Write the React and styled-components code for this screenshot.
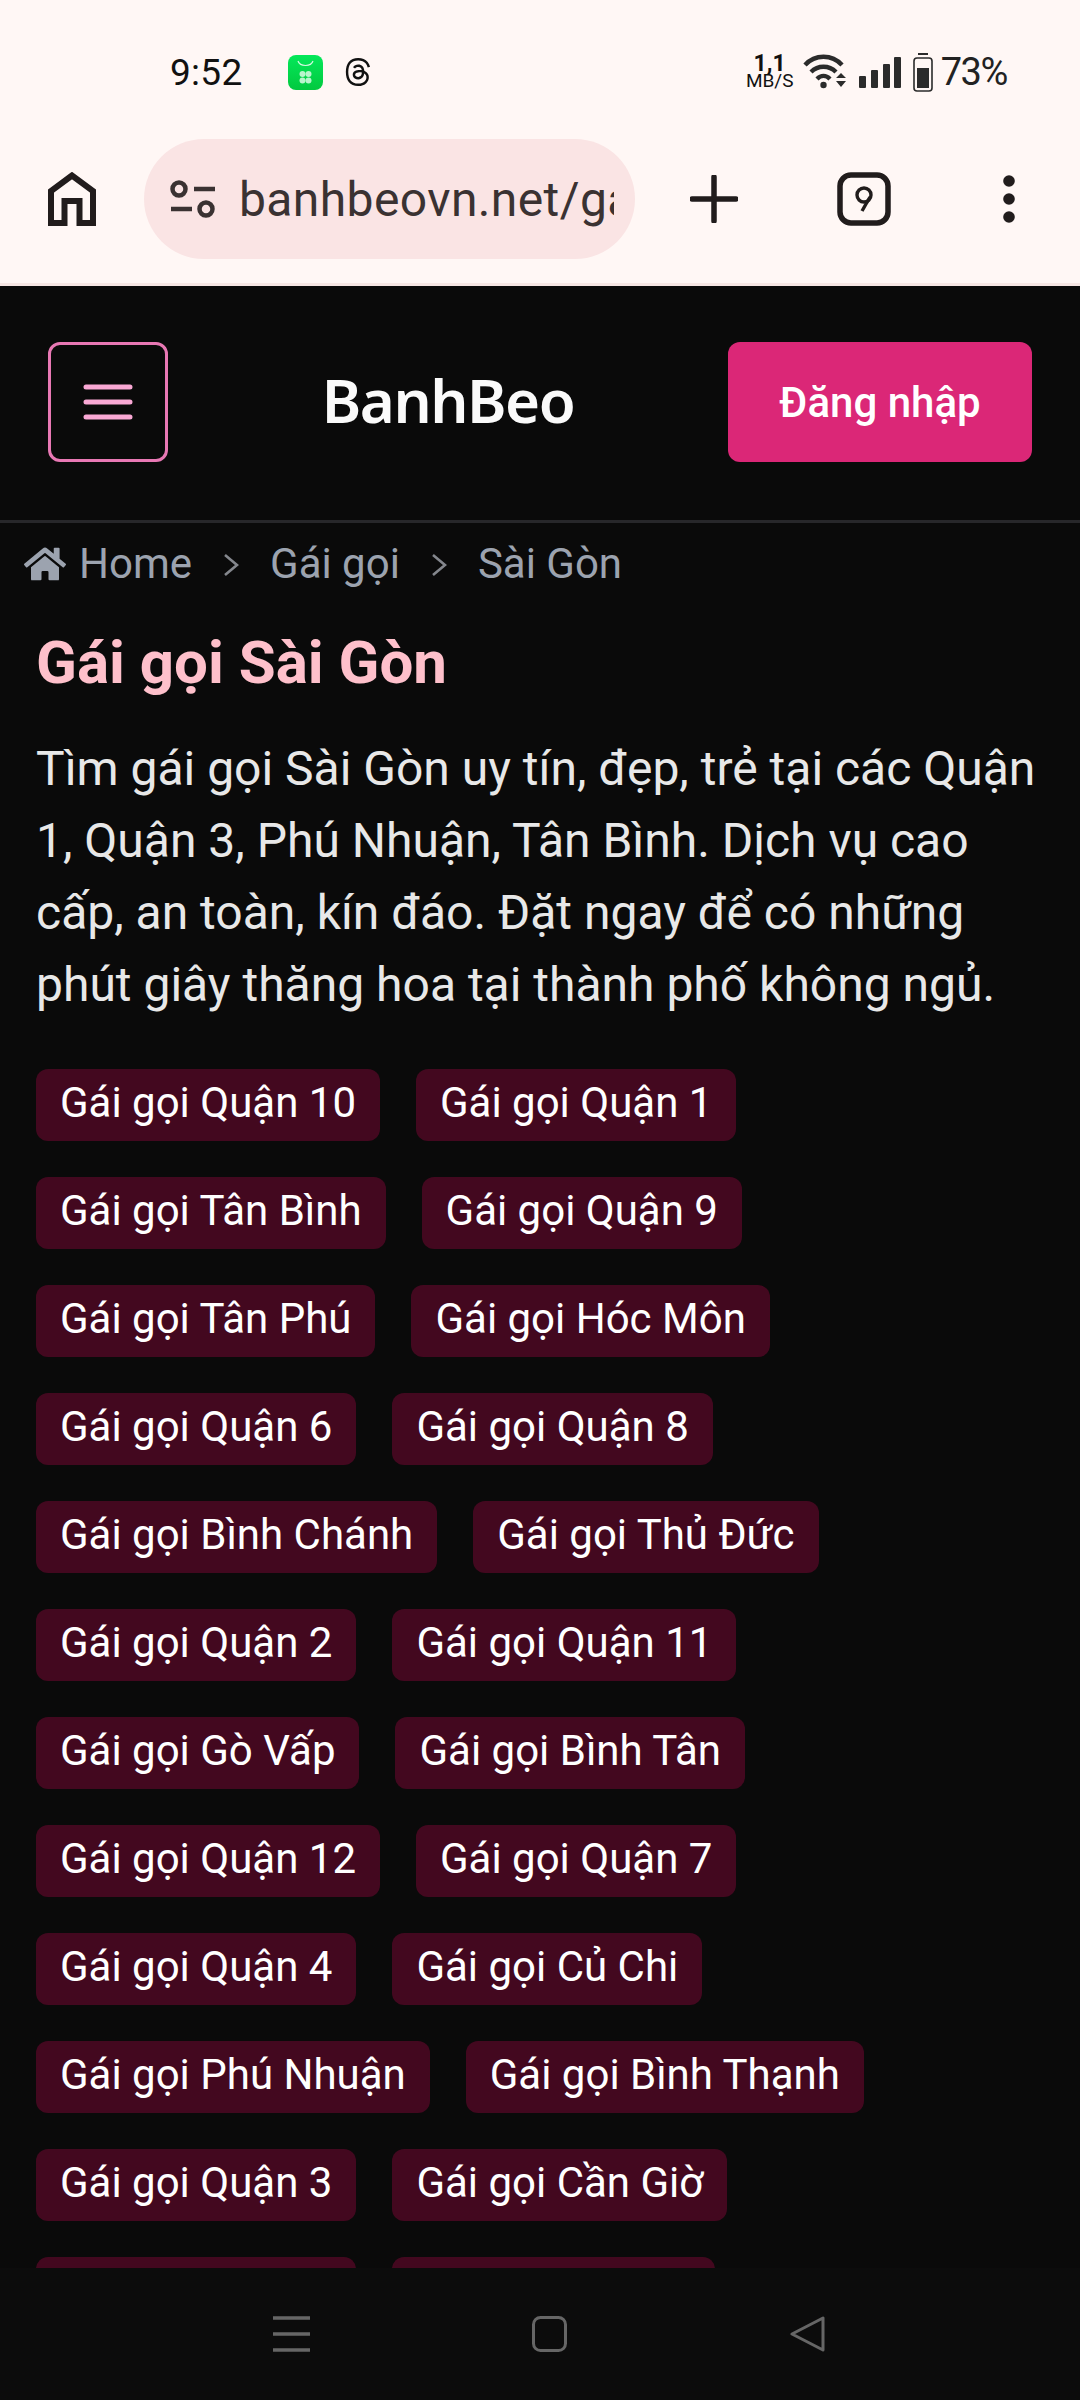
import React from 'react';
import styled, { createGlobalStyle } from 'styled-components';
import { FaHome } from 'react-icons/fa';
import { FaThreads } from 'react-icons/fa6';

const GlobalStyle = createGlobalStyle`
  html, body {
    margin: 0;
    padding: 0;
    background: #0a0a0a;
    font-family: Roboto, "Noto Sans", sans-serif;
  }
  * { box-sizing: border-box; }
`;

const Phone = styled.div`
  width: 1080px;
  height: 2400px;
  display: flex;
  flex-direction: column;
  overflow: hidden;
`;

const StatusBar = styled.div`
  height: 139px;
  background: #fff7f5;
  color: #111;
  display: flex;
  align-items: center;
  padding: 5px 73px 0 170px;
  flex-shrink: 0;
`;

const Time = styled.span`
  font-size: 37px;
  width: 118px;
  letter-spacing: 0.3px;
`;

const AppIcon = styled.svg`
  width: 35px;
  height: 35px;
  margin-right: 20px;
`;

const StatusRight = styled.div`
  margin-left: auto;
  display: flex;
  align-items: center;
`;

const Speed = styled.div`
  width: 46px;
  margin-right: 10px;
  display: flex;
  flex-direction: column;
  align-items: center;
  font-size: 19px;
  line-height: 17px;
  font-weight: 400;
  color: #111;
  b {
    font-size: 23px;
    line-height: 17px;
    font-weight: 700;
  }
`;

const StatusSvg = styled.svg`
  display: block;
  margin-right: ${(p) => p.$gap}px;
`;

const Percent = styled.span`
  font-size: 38px;
  color: #222;
  letter-spacing: -1.4px;
`;

const Toolbar = styled.div`
  height: 147px;
  background: #fff7f5;
  border-bottom: 3px solid #f6e6e4;
  display: flex;
  align-items: flex-start;
  padding-left: 48px;
  flex-shrink: 0;
`;

const ToolIcon = styled.svg`
  display: block;
  margin-top: ${(p) => p.$top}px;
  margin-left: ${(p) => p.$left}px;
  color: #211c1c;
`;

const UrlPill = styled.div`
  width: 491px;
  height: 120px;
  margin-left: 48px;
  border-radius: 60px;
  background: #fae4e4;
  display: flex;
  align-items: center;
  padding-left: 26px;
  color: #3a3232;
`;

const UrlText = styled.div`
  margin-left: 24px;
  width: 375px;
  font-size: 48px;
  white-space: nowrap;
  overflow: hidden;
  font-family: Roboto, sans-serif;
  letter-spacing: 0.4px;
`;

const Web = styled.div`
  flex: 1;
  min-height: 0;
  overflow: hidden;
  background: #0a0a0a;
`;

const Header = styled.header`
  height: 237px;
  display: flex;
  align-items: center;
  justify-content: space-between;
  padding: 0 48px 2px;
  border-bottom: 3px solid #27272a;
`;

const MenuButton = styled.button`
  width: 120px;
  height: 120px;
  background: transparent;
  border: 3px solid #e878b4;
  border-radius: 12px;
  display: flex;
  align-items: center;
  justify-content: center;
  padding: 0;
  color: #f9a8d4;
`;

const Logo = styled.div`
  font-family: "Noto Sans", sans-serif;
  font-size: 60px;
  line-height: 72px;
  font-weight: 600;
  letter-spacing: -1.5px;
  color: #fafafa;
  padding-bottom: 4px;
`;

const LoginButton = styled.button`
  width: 304px;
  height: 120px;
  background: #db2777;
  color: #fff;
  border: none;
  border-radius: 12px;
  font-family: Roboto, sans-serif;
  font-size: 42px;
  font-weight: 500;
`;

const Crumbs = styled.nav`
  height: 81px;
  padding: 0 24px;
  display: flex;
  align-items: center;
  color: #9ca3af;
  font-size: 42px;
  svg.home {
    width: 42px;
    height: 38px;
    margin-right: 13px;
  }
`;

const CrumbSep = styled.svg`
  display: block;
  width: 16px;
  height: 24px;
  margin: 3px 31px 0;
  color: #84878d;
`;

const Main = styled.main`
  padding: 0 36px;
`;

const Title = styled.h1`
  margin: 23px 0 0;
  font-size: 60px;
  line-height: 72px;
  font-weight: 700;
  color: #fec0cb;
`;

const Intro = styled.p`
  margin: 34px 0 0;
  font-size: 48px;
  line-height: 72px;
  color: #e8e8e8;
`;

const Tags = styled.div`
  margin-top: 48px;
  display: flex;
  flex-wrap: wrap;
  gap: 36px;
`;

const Tag = styled.a`
  height: 72px;
  padding: 0 24px;
  border-radius: 12px;
  background: #43081f;
  color: #fff;
  font-size: 42px;
  line-height: 68px;
  white-space: nowrap;
`;

const NavBar = styled.div`
  height: 132px;
  background: #0c0c0c;
  flex-shrink: 0;
  display: flex;
  align-items: flex-start;
  padding: 48px 0 0 273px;
  color: #666;
`;

const NavIcon = styled.svg`
  display: block;
  margin-right: ${(p) => p.$gap}px;
`;

const tagNames = [
  'Quận 10', 'Quận 1', 'Tân Bình', 'Quận 9', 'Tân Phú', 'Hóc Môn',
  'Quận 6', 'Quận 8', 'Bình Chánh', 'Thủ Đức', 'Quận 2', 'Quận 11',
  'Gò Vấp', 'Bình Tân', 'Quận 12', 'Quận 7', 'Quận 4', 'Củ Chi',
  'Phú Nhuận', 'Bình Thạnh', 'Quận 3', 'Cần Giờ', 'Quận 5', 'Nhà Bè',
];

const Chevron = () => (
  <CrumbSep viewBox="0 0 16 24">
    <path d="M2 2l12 10L2 22" fill="none" stroke="currentColor" strokeWidth="2.6" />
  </CrumbSep>
);

const App = () => (
  <Phone>
    <GlobalStyle />
    <StatusBar>
      <Time>9:52</Time>
      <AppIcon viewBox="0 0 35 35">
        <defs>
          <linearGradient id="storeGreen" x1="0" y1="0" x2="0" y2="1">
            <stop offset="0" stopColor="#05e85a" />
            <stop offset="1" stopColor="#02c93f" />
          </linearGradient>
        </defs>
        <rect width="35" height="35" rx="8" fill="url(#storeGreen)" />
        <path d="M10 6c2 6 13 6 15 0" fill="none" stroke="#d4f8e0" strokeWidth="1.2" />
        <g fill="#b9f5cd">
          <circle cx="14.5" cy="19" r="3" />
          <circle cx="20.5" cy="19" r="3" />
          <circle cx="14.5" cy="25.5" r="3" />
          <circle cx="20.5" cy="25.5" r="3" />
        </g>
      </AppIcon>
      <FaThreads size={30} color="#111" />
      <StatusRight>
        <Speed>
          <b>1,1</b>
          MB/S
        </Speed>
        <StatusSvg $gap={12} width="44" height="36" viewBox="0 0 44 36">
          <g fill="none" stroke="#2b2b2b" strokeWidth="4.4">
            <path d="M2 11C12 0 29 0 39 11" />
            <path d="M8 18c7-7 18-7 25 0" />
            <path d="M14 25c4-4 9-4 13 0" />
          </g>
          <circle cx="20.5" cy="31" r="3.2" fill="#2b2b2b" />
          <path d="M33 24h10l-5-5zM33 27h10l-5 6z" fill="#2b2b2b" />
        </StatusSvg>
        <StatusSvg $gap={12} width="42" height="31" viewBox="0 0 42 31">
          <g fill="#2b2b2b">
            <rect x="0" y="19" width="7" height="12" rx="1" />
            <rect x="12" y="13" width="7" height="18" rx="1" />
            <rect x="24" y="7" width="7" height="24" rx="1" />
            <rect x="35" y="0" width="7" height="31" rx="1" />
          </g>
        </StatusSvg>
        <StatusSvg $gap={8} width="20" height="39" viewBox="0 0 20 39">
          <rect x="5" y="0" width="10" height="2" fill="#2b2b2b" />
          <rect x="1" y="5" width="18" height="33" rx="3" fill="none" stroke="#2b2b2b" strokeWidth="1.6" />
          <rect x="4" y="15" width="12" height="20" fill="#2b2b2b" />
        </StatusSvg>
        <Percent>73%</Percent>
      </StatusRight>
    </StatusBar>

    <Toolbar>
      <ToolIcon $top={33} $left={0} width="48" height="54" viewBox="0 0 48 54">
        <path
          d="M24 3.5 3 19v32h13.5V29h15v22H45V19z"
          fill="none"
          stroke="currentColor"
          strokeWidth="6"
        />
      </ToolIcon>
      <UrlPill>
        <svg width="45" height="38" viewBox="0 0 45 38" fill="none" stroke="currentColor" strokeWidth="4.5">
          <circle cx="9" cy="9" r="6.5" />
          <circle cx="36" cy="29" r="6.5" />
          <path d="M24 9h21M1 29h21" />
        </svg>
        <UrlText>banhbeovn.net/gái-gọi</UrlText>
      </UrlPill>
      <ToolIcon $top={36} $left={55} width="48" height="48" viewBox="0 0 48 48">
        <path d="M24 2v44M2 24h44" stroke="currentColor" strokeWidth="5.5" strokeLinecap="round" />
      </ToolIcon>
      <ToolIcon $top={33} $left={99} width="54" height="54" viewBox="0 0 54 54">
        <rect x="3" y="3" width="48" height="48" rx="11" fill="none" stroke="currentColor" strokeWidth="5.5" />
        <circle cx="27" cy="23" r="7" fill="none" stroke="currentColor" strokeWidth="3.4" />
        <path d="M33 25 25 39" stroke="currentColor" strokeWidth="3.4" />
      </ToolIcon>
      <ToolIcon $top={36} $left={112} width="12" height="48" viewBox="0 0 12 48">
        <circle cx="6" cy="6" r="5.8" fill="currentColor" />
        <circle cx="6" cy="24" r="5.8" fill="currentColor" />
        <circle cx="6" cy="42" r="5.8" fill="currentColor" />
      </ToolIcon>
    </Toolbar>

    <Web>
      <Header>
        <MenuButton aria-label="menu">
          <svg width="50" height="36" viewBox="0 0 50 36">
            <path d="M3 3h44M3 18h44M3 33h44" stroke="currentColor" strokeWidth="5" strokeLinecap="round" />
          </svg>
        </MenuButton>
        <Logo>BanhBeo</Logo>
        <LoginButton>Đăng nhập</LoginButton>
      </Header>

      <Crumbs>
        <FaHome className="home" />
        <span>Home</span>
        <Chevron />
        <span>Gái gọi</span>
        <Chevron />
        <span>Sài Gòn</span>
      </Crumbs>

      <Main>
        <Title>Gái gọi Sài Gòn</Title>
        <Intro>
          Tìm gái gọi Sài Gòn uy tín, đẹp, trẻ tại các Quận 1, Quận 3, Phú Nhuận, Tân Bình. Dịch vụ cao
          cấp, an toàn, kín đáo. Đặt ngay để có những phút giây thăng hoa tại thành phố không ngủ.
        </Intro>
        <Tags>
          {tagNames.map((name) => (
            <Tag key={name}>Gái gọi {name}</Tag>
          ))}
        </Tags>
      </Main>
    </Web>

    <NavBar>
      <NavIcon $gap={222} width="37" height="36" viewBox="0 0 37 36">
        <path d="M0 2h37M0 18h37M0 34h37" stroke="currentColor" strokeWidth="3.6" />
      </NavIcon>
      <NavIcon $gap={223} width="35" height="36" viewBox="0 0 35 36">
        <rect x="1.5" y="1.5" width="32" height="33" rx="7" fill="none" stroke="currentColor" strokeWidth="3" />
      </NavIcon>
      <NavIcon $gap={0} width="35" height="36" viewBox="0 0 35 36">
        <path
          d="M33 2v32L2 18z"
          fill="none"
          stroke="currentColor"
          strokeWidth="3"
          strokeLinejoin="round"
        />
      </NavIcon>
    </NavBar>
  </Phone>
);

export default App;
